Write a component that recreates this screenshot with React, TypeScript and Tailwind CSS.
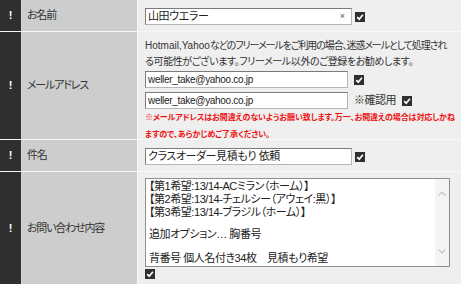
import React from "react";

const jp = "font-['Liberation_Sans','Noto_Sans_CJK_JP',sans-serif] [font-feature-settings:'palt']";

function Check({ className = "" }: { className?: string }) {
  return (
    <svg width="10" height="10" viewBox="0 0 10 10" className={`shrink-0 ${className}`}>
      <rect width="10" height="10" fill="#2f2f2f" />
      <path d="M2.2 5.2 L4.2 7.2 L7.9 2.8" stroke="#fff" strokeWidth="1.7" fill="none" />
    </svg>
  );
}

function Field({ value, width, clear, mono }: { value: string; width: string; clear?: boolean; mono?: boolean }) {
  return (
    <div
      className={`flex h-[17px] shrink-0 items-center border border-[#7a7a7a] border-r-[#b5b5b5] border-b-[#b5b5b5] bg-white pl-[2px] pr-[6px] text-[#222] ${width}`}>
      <span
        className={`flex-1 whitespace-nowrap leading-none ${mono ? "text-[10px] tracking-[-0.3px]" : "text-[11px] tracking-[-0.4px]"}`}>
        {value}
      </span>
      {clear && <span className="text-[9px] leading-none text-[#555]">×</span>}
    </div>
  );
}

function Row({ label, h, children }: { label: string; h: string; children: React.ReactNode }) {
  return (
    <div className={`flex ${h}`}>
      <div className="flex w-[21px] items-center justify-center bg-[#2f2f2f] text-[11px] font-bold text-white">!</div>
      <div className="w-px bg-[#d8d8d8]" />
      <div className="flex w-[115px] items-center bg-[#cdcdcd] pl-[5px] text-[11px] tracking-[-1.2px] text-[#333]">
        {label}
      </div>
      <div className="w-px bg-[#f7f7f7]" />
      <div className="flex-1 bg-[#efefef] pl-[7px]">{children}</div>
    </div>
  );
}

export default function App() {
  return (
    <div className={`h-[284px] w-[461px] overflow-hidden bg-[#efefef] ${jp}`}>
      <Row label="お名前" h="h-[31px]">
        <div className="flex items-center gap-[3px] pt-[8px]">
          <Field value="山田ウエラー" width="w-[207px]" clear />
          <Check />
        </div>
      </Row>
      <div className="h-px bg-[#f8f8f8]" />
      <Row label="メールアドレス" h="h-[107px]">
        <p className="whitespace-nowrap pt-[6px] text-[10px] leading-[16px] text-[#333]">
          <span>Hotmail,Yahoo</span>
          <span className="tracking-[-1.1px]">などのフリーメールをご利用の場合、迷惑メールとして処理され</span>
          <br />
          <span className="tracking-[-0.4px]">る可能性がございます。フリーメール以外のご登録をお勧めします。</span>
        </p>
        <div className="mt-px flex items-center gap-[6px]">
          <Field value="weller_take@yahoo.co.jp" width="w-[203px]" mono />
          <Check />
        </div>
        <div className="mt-[4px] flex items-center gap-[6px]">
          <Field value="weller_take@yahoo.co.jp" width="w-[203px]" mono />
          <span className="text-[11px] tracking-[-0.5px] text-[#333]">※確認用</span>
          <Check />
        </div>
        <p className="whitespace-nowrap text-[8px] font-bold leading-[17px] tracking-[-0.1px] text-[#ee1111]">
          ※メールアドレスはお間違えのないようお願い致します。万一、お間違えの場合は対応しかね
          <br />
          ますので、あらかじめご了承ください。
        </p>
      </Row>
      <div className="h-px bg-[#f8f8f8]" />
      <Row label="件名" h="h-[31px]">
        <div className="flex items-center gap-[3px] pt-[8px]">
          <Field value="クラスオーダー見積もり 依頼" width="w-[207px]" />
          <Check />
        </div>
      </Row>
      <div className="h-px bg-[#f8f8f8]" />
      <Row label="お問い合わせ内容" h="h-[112px]">
        <div className="pt-[6px]">
          <div className="flex h-[89px] w-[305px] border border-[#8f8f8f] bg-white">
            <div className="flex-1 whitespace-nowrap pl-[3px] pt-[1px] text-[11px] tracking-[-0.45px] text-[#222]">
              <div className="leading-[13px]">【第1希望:13/14-ACミラン（ホーム）】</div>
              <div className="leading-[13px]">【第2希望:13/14-チェルシー（アウェイ:黒）】</div>
              <div className="leading-[13px]">【第3希望:13/14-ブラジル（ホーム）】</div>
              <div className="mt-[9px] leading-[13px]">追加オプション… 胸番号</div>
              <div className="mt-[11px] leading-[13px]">背番号 個人名付き34枚　見積もり希望</div>
            </div>
            <div className="flex w-[14px] flex-col items-center justify-between bg-[#f4f4f4] py-[12px]">
              <svg width="8" height="5" viewBox="0 0 8 5">
                <path d="M0.5 4.5 L4 1 L7.5 4.5" stroke="#c4c4c4" strokeWidth="1.2" fill="none" />
              </svg>
              <svg width="8" height="5" viewBox="0 0 8 5">
                <path d="M0.5 0.5 L4 4 L7.5 0.5" stroke="#c4c4c4" strokeWidth="1.2" fill="none" />
              </svg>
            </div>
          </div>
          <Check className="mt-[2px]" />
        </div>
      </Row>
    </div>
  );
}
